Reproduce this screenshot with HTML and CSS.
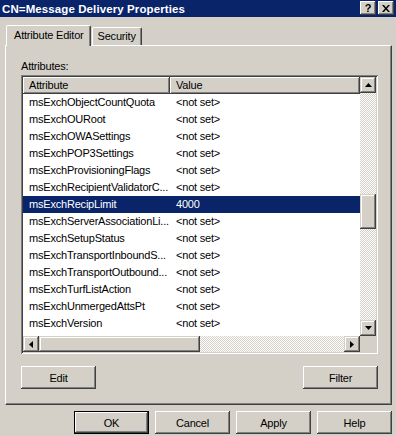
FILE: index.html
```html
<!DOCTYPE html>
<html lang="en">
<head>
    <meta charset="UTF-8">
    <title>CN=Message Delivery Properties</title>
    <link rel="stylesheet" href="styles.css">
</head>
<body>
    <div class="window">
        <div class="titlebar">
            <span class="title">CN=Message Delivery Properties</span>
            <div class="caption-btns">
                <span class="cap-btn help">?</span>
                <span class="cap-btn">
                    <svg width="8" height="7" viewBox="0 0 8 7"><path d="M0 0h2l2 2.5 2-2.5h2l-3 3.5 3 3.5h-2l-2-2.5-2 2.5h-2l3-3.5z" fill="#000"/></svg>
                </span>
            </div>
        </div>

        <div class="tabs">
            <div class="tab active">Attribute Editor</div>
            <div class="tab">Security</div>
        </div>

        <div class="panel">
            <div class="label">Attributes:</div>
            <div class="listbox">
                <div class="list-main">
                    <div class="list-view">
                        <div class="list-head">
                            <div class="col-head">Attribute</div>
                            <div class="col-head">Value</div>
                        </div>
                        <div class="row"><span>msExchObjectCountQuota</span><span>&lt;not set&gt;</span></div>
                        <div class="row"><span>msExchOURoot</span><span>&lt;not set&gt;</span></div>
                        <div class="row"><span>msExchOWASettings</span><span>&lt;not set&gt;</span></div>
                        <div class="row"><span>msExchPOP3Settings</span><span>&lt;not set&gt;</span></div>
                        <div class="row"><span>msExchProvisioningFlags</span><span>&lt;not set&gt;</span></div>
                        <div class="row"><span>msExchRecipientValidatorC...</span><span>&lt;not set&gt;</span></div>
                        <div class="row selected"><span>msExchRecipLimit</span><span>4000</span></div>
                        <div class="row"><span>msExchServerAssociationLi...</span><span>&lt;not set&gt;</span></div>
                        <div class="row"><span>msExchSetupStatus</span><span>&lt;not set&gt;</span></div>
                        <div class="row"><span>msExchTransportInboundS...</span><span>&lt;not set&gt;</span></div>
                        <div class="row"><span>msExchTransportOutbound...</span><span>&lt;not set&gt;</span></div>
                        <div class="row"><span>msExchTurfListAction</span><span>&lt;not set&gt;</span></div>
                        <div class="row"><span>msExchUnmergedAttsPt</span><span>&lt;not set&gt;</span></div>
                        <div class="row"><span>msExchVersion</span><span>&lt;not set&gt;</span></div>
                        <div class="row"><span>msExchVersionFlags</span><span>Version Full</span></div>
                    </div>
                    <div class="vscroll">
                        <div class="sb-btn">
                            <svg width="7" height="4" viewBox="0 0 7 4"><path d="M3.5 0L7 4H0z" fill="#000"/></svg>
                        </div>
                        <div class="track track-top"></div>
                        <div class="thumb v-thumb"></div>
                        <div class="track track-rest"></div>
                        <div class="sb-btn">
                            <svg width="7" height="4" viewBox="0 0 7 4"><path d="M0 0h7L3.5 4z" fill="#000"/></svg>
                        </div>
                    </div>
                </div>
                <div class="hscroll-row">
                    <div class="hscroll">
                        <div class="sb-btn">
                            <svg width="4" height="7" viewBox="0 0 4 7"><path d="M0 3.5L4 0v7z" fill="#000"/></svg>
                        </div>
                        <div class="thumb h-thumb"></div>
                        <div class="track track-rest"></div>
                        <div class="sb-btn">
                            <svg width="4" height="7" viewBox="0 0 4 7"><path d="M0 0l4 3.5L0 7z" fill="#000"/></svg>
                        </div>
                    </div>
                    <div class="corner"></div>
                </div>
            </div>
            <div class="panel-buttons">
                <button class="btn">Edit</button>
                <button class="btn">Filter</button>
            </div>
        </div>

        <div class="footer">
            <button class="btn default">OK</button>
            <button class="btn">Cancel</button>
            <button class="btn">Apply</button>
            <button class="btn">Help</button>
        </div>
    </div>
</body>
</html>
```

FILE: styles.css
```css
body {
    margin: 0;
    background: #d4d0c8;
    font-family: "Liberation Sans", Arial, sans-serif;
    font-size: 11px;
    letter-spacing: -0.2px;
    color: #000;
}
.window {
    width: 396px;
    height: 436px;
    overflow: hidden;
}

/* title bar */
.titlebar {
    height: 17px;
    background: #0a246a;
    display: flex;
    align-items: center;
    justify-content: space-between;
    padding: 0 2px;
}
.title {
    color: #fff;
    font-weight: bold;
    font-size: 11.5px;
    letter-spacing: 0.1px;
}
.caption-btns {
    display: flex;
    gap: 2px;
    align-self: flex-start;
    margin-top: 1px;
}
.cap-btn {
    width: 16px;
    height: 14px;
    background: #d4d0c8;
    display: flex;
    align-items: center;
    justify-content: center;
    box-shadow: inset -1px -1px #404040, inset 1px 1px #fff, inset -2px -2px #808080;
}
.cap-btn.help {
    font-weight: bold;
    font-size: 11px;
    line-height: 14px;
}

/* tabs */
.tabs {
    display: flex;
    align-items: flex-end;
    height: 20px;
    margin-top: 8px;
    padding-left: 6px;
}
.tab {
    height: 17px;
    line-height: 17px;
    padding: 0 5px;
    border-top: 1px solid #fff;
    border-left: 1px solid #fff;
    border-right: 1px solid #404040;
    border-radius: 2px 2px 0 0;
    box-shadow: inset -1px 0 #808080;
    margin-left: 1px;
}
.tab.active {
    position: relative;
    z-index: 1;
    height: 20px;
    line-height: 19px;
    padding: 0 6px 0 7px;
    margin-left: 0;
    margin-bottom: -1px;
    background: #d4d0c8;
}

/* tab page */
.panel {
    box-sizing: border-box;
    width: 387px;
    height: 360px;
    margin-left: 5px;
    border-top: 1px solid #fff;
    border-left: 1px solid #fff;
    border-right: 1px solid #404040;
    border-bottom: 1px solid #404040;
    box-shadow: inset -1px -1px #808080;
    padding: 14px 12px 0 15px;
}
.label {
    line-height: 13px;
    margin-bottom: 2px;
}
.listbox {
    width: 357px;
    height: 279px;
    box-sizing: border-box;
    padding: 2px;
    background: #fff;
    box-shadow: inset 1px 1px #808080, inset -1px -1px #fff, inset 2px 2px #404040, inset -2px -2px #d4d0c8;
}
.list-main {
    display: flex;
    height: 259px;
}
.list-view {
    width: 337px;
    overflow: hidden;
    background: #fff;
}
.list-head {
    display: grid;
    grid-template-columns: 147px 190px;
    height: 17px;
}
.col-head {
    background: #d4d0c8;
    padding-left: 6px;
    line-height: 16px;
    box-shadow: inset -1px -1px #404040, inset 1px 1px #fff, inset -2px -2px #808080;
}
.row {
    display: grid;
    grid-template-columns: 147px 190px;
    height: 17px;
    line-height: 17px;
    white-space: nowrap;
}
.row span {
    padding-left: 6px;
    overflow: hidden;
}
.row.selected {
    background: #0a246a;
    color: #fff;
}

/* scrollbars */
.vscroll {
    width: 16px;
    display: flex;
    flex-direction: column;
}
.sb-btn {
    width: 16px;
    height: 16px;
    flex: none;
    background: #d4d0c8;
    display: flex;
    align-items: center;
    justify-content: center;
    box-shadow: inset -1px -1px #404040, inset 1px 1px #d4d0c8, inset -2px -2px #808080, inset 2px 2px #fff;
}
.track {
    background: repeating-conic-gradient(#fff 0 25%, #d4d0c8 0 50%) 0 0 / 2px 2px;
}
.track-top {
    height: 101px;
}
.track-rest {
    flex: 1;
}
.thumb {
    flex: none;
    background: #d4d0c8;
    box-shadow: inset -1px -1px #404040, inset 1px 1px #d4d0c8, inset -2px -2px #808080, inset 2px 2px #fff;
}
.v-thumb {
    height: 35px;
}
.hscroll-row {
    display: flex;
    height: 16px;
}
.hscroll {
    width: 337px;
    display: flex;
}
.h-thumb {
    width: 161px;
}
.corner {
    width: 16px;
    background: #d4d0c8;
}

/* buttons */
.btn {
    width: 75px;
    height: 23px;
    padding: 0;
    border: none;
    background: #d4d0c8;
    font-family: "Liberation Sans", Arial, sans-serif;
    font-size: 11px;
    letter-spacing: -0.2px;
    color: #000;
    box-shadow: inset -1px -1px #404040, inset 1px 1px #fff, inset -2px -2px #808080;
}
.btn.default {
    border: 1px solid #000;
}
.panel-buttons {
    display: flex;
    justify-content: space-between;
    width: 357px;
    margin-top: 12px;
}
.footer {
    display: flex;
    justify-content: flex-end;
    gap: 6px;
    padding-right: 4px;
    margin-top: 6px;
}
```
